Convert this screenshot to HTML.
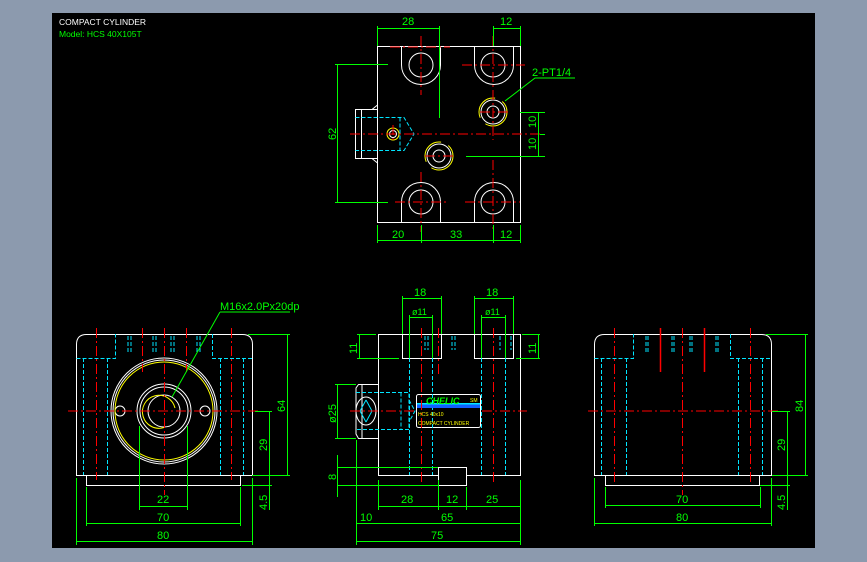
<!DOCTYPE html>
<html><head><meta charset="utf-8"><style>
html,body{margin:0;padding:0;background:#8c9aae;width:867px;height:562px;overflow:hidden}
svg{display:block}
text{font-family:"Liberation Sans",sans-serif}
</style></head><body>
<svg width="867" height="562" viewBox="0 0 867 562" xmlns="http://www.w3.org/2000/svg">
<rect x="52" y="13" width="763" height="535" fill="#000"/>
<text x="59" y="25" fill="#fff" font-size="8.5">COMPACT CYLINDER</text>
<text x="59" y="37" fill="#00ff00" font-size="8.5">Model: HCS 40X105T</text>

<g fill="none" stroke-width="1">
<!-- TOP VIEW -->
<g stroke="#fff">
<rect x="377.5" y="46.5" width="143" height="176"/>
<path d="M401.5 46.5V65A19.5 19.5 0 0 0 440.5 65V46.5"/>
<path d="M474.5 46.5V65A19.5 19.5 0 0 0 513.5 65V46.5"/>
<path d="M401.5 222.5V202A19.5 19.5 0 0 1 440.5 202V222.5"/>
<path d="M474.5 222.5V202A19.5 19.5 0 0 1 513.5 202V222.5"/>
<circle cx="421" cy="65" r="12"/><circle cx="493" cy="65" r="12"/>
<circle cx="421" cy="202" r="12"/><circle cx="493" cy="202" r="12"/>
<circle cx="493" cy="112" r="12"/><circle cx="493" cy="112" r="6"/>
<circle cx="439" cy="156" r="12"/><circle cx="439" cy="156" r="6"/>
<path d="M377.5 109.5H355.5V158.5H377.5M361.5 109.5V158.5M372 109.5L377.5 105M372 158.5L377.5 163"/>
</g>
<circle cx="493" cy="112" r="14" stroke="#ff0" stroke-dasharray="30 8"/>
<circle cx="439" cy="156" r="14" stroke="#ff0" stroke-dasharray="30 8"/>
<circle cx="393" cy="134" r="6" stroke="#ff0"/><circle cx="393" cy="134" r="3.5" stroke="#fff"/>
<path d="M355.5 117.5H404L414 134L404 150.5H355.5M400 117.5V150.5" stroke="#00e5ff" stroke-dasharray="4 2"/>
<g stroke="#f00" stroke-dasharray="10 3 2 3">
<path d="M350 134H540M421 36V95M493 36V140M421 172V232M493 160V232M390 47H450M462 65H525M395 202H448M465 202H520M480 112H510M425 156H455M393 125V143"/>
</g>
<g stroke="#00ff00">
<path d="M377.5 26V46M439.5 26V118M377.5 28.5H439.5M493.5 26V46M520.5 26V46M493.5 28.5H520.5"/>
<path d="M335 64.5H388M335 202.5H388M337.5 64.5V202.5"/>
<path d="M377.5 225V243M421.5 225V243M493.5 225V243M520.5 225V243M377.5 240.5H520.5"/>
<path d="M520 112.5H545M466 156.5H545M540 134.5H545M538.5 112.5V156.5"/>
<path d="M505 101L535 78H575"/>
</g>
<g fill="#00ff00" font-size="11" stroke="none">
<text x="402" y="25">28</text><text x="500" y="25">12</text>
<text x="392" y="238">20</text><text x="450" y="238">33</text><text x="500" y="238">12</text>
<text x="532" y="76">2-PT1/4</text>
<text transform="translate(336 140) rotate(-90)">62</text>
<text transform="translate(536 128) rotate(-90)">10</text>
<text transform="translate(536 150) rotate(-90)">10</text>
</g>

<!-- FRONT VIEW -->
<g stroke="#fff">
<rect x="378.5" y="334.5" width="142" height="141"/>
<rect x="402.5" y="334.5" width="39" height="24"/>
<rect x="474.5" y="334.5" width="39" height="24"/>
<rect x="438.5" y="467.5" width="28" height="18" fill="#000"/>
<path d="M378.5 384.5H358.5L356 388V434L358.5 438.5H378.5M362 384.5V438.5"/>
<ellipse cx="366" cy="411" rx="10" ry="14"/>
<rect x="416.5" y="394.5" width="64" height="33" rx="2" fill="#000"/>
</g>
<path d="M366 400L360 411L366 422M366 400L372 411L366 422" stroke="#00e5ff"/>
<path d="M356 392.5H409V429.5H356M401 392.5V429.5M409 400L415 411L409 422" stroke="#00e5ff" stroke-dasharray="4 2"/>
<path d="M409.5 358V475M432.5 358V475M481.5 358V475M505.5 358V475M425 336V350M428 336V350M452 336V350M455 336V350M500 336V350M511 336V350" stroke="#00e5ff" stroke-dasharray="4 2"/>
<rect x="417" y="404" width="63" height="4" fill="#1060ff" stroke="none"/>
<rect x="417" y="403" width="63" height="1.5" fill="#00e5ff" stroke="none"/>
<g stroke="#f00" stroke-dasharray="10 3 2 3">
<path d="M350 411H415M482 411H527M421.5 328V482M493.5 328V482M438.5 328V375"/>
</g>
<g stroke="#00ff00">
<path d="M402.5 296V334M441.5 296V334M402.5 298.5H441.5M474.5 296V334M513.5 296V334M474.5 298.5H513.5"/>
<path d="M409.5 315V358M432.5 315V358M409.5 317.5H432.5M481.5 315V358M505.5 315V358M481.5 317.5H505.5"/>
<path d="M357 334.5H376M357 358.5H399M359.5 334.5V358.5M522 334.5H540M516 358.5H540M538.5 334.5V358.5"/>
<path d="M335 384.5H356M335 438.5H356M337.5 384.5V438.5"/>
<path d="M337 467.5H438M337 485.5H438M337.5 455V497"/>
<path d="M378.5 480V510M438.5 480V510M466.5 487V510M520.5 480V545M378.5 506.5H520.5"/>
<path d="M356.5 440V545M356.5 523.5H520.5M356.5 541.5H520.5"/>
</g>
<g fill="#00ff00" font-size="11" stroke="none">
<text x="414" y="296">18</text><text x="486" y="296">18</text>
<text x="412" y="315" font-size="9">ø11</text><text x="485" y="315" font-size="9">ø11</text>
<text transform="translate(357 354) rotate(-90)">11</text>
<text transform="translate(536 354) rotate(-90)">11</text>
<text transform="translate(336 423) rotate(-90)">ø25</text>
<text transform="translate(336 480) rotate(-90)">8</text>
<text x="401" y="503">28</text><text x="446" y="503">12</text><text x="486" y="503">25</text>
<text x="360" y="521">10</text><text x="441" y="521">65</text><text x="431" y="539">75</text>
<text x="426" y="404" font-size="9" font-weight="bold" font-style="italic">CHELIC</text>
</g>
<g fill="#ff0" font-size="5" stroke="none">
<text x="470" y="402">SM</text><text x="418" y="416">HCS 40x10</text><text x="418" y="425">COMPACT CYLINDER</text>
</g>

<!-- LEFT VIEW -->
<g stroke="#fff">
<path d="M76.5 475.5V344.5Q76.5 334.5 86.5 334.5H242.5Q252.5 334.5 252.5 344.5V475.5Z"/>
<rect x="86.5" y="475.5" width="154" height="10"/>
<circle cx="164" cy="411" r="53"/><circle cx="164" cy="411" r="51"/>
<circle cx="164" cy="411" r="27"/><circle cx="164" cy="411" r="24"/><circle cx="164" cy="411" r="16"/>
<circle cx="120" cy="411" r="5"/><circle cx="205" cy="411" r="5"/>
</g>
<circle cx="164" cy="411" r="49" stroke="#ff0"/>
<path d="M153 414A16.5 16.5 0 1 0 164 394.5" stroke="#ff0" transform="rotate(180 164 411)"/>
<path d="M76.5 358.5H115.5V334M212.5 334V358.5H252.5M83.5 358V475M107.5 358V475M220.5 358V475M243.5 358V475M128 336V352M131 336V352M153 336V352M156 336V352M171 336V352M174 336V352M197 336V352M200 336V352" stroke="#00e5ff" stroke-dasharray="4 2"/>
<g stroke="#f00" stroke-dasharray="10 3 2 3">
<path d="M68 411H260M96.5 328V480M231.5 328V480M164.5 328V495M142.5 328V372M186.5 328V372"/>
</g>
<g stroke="#00ff00">
<path d="M220 312H290M220 312L172 397"/>
<path d="M248 334.5H290M252 475.5H290M287.5 334.5V475.5"/>
<path d="M255 411.5H272M242 485.5H272M269.5 411.5V510"/>
<path d="M139.5 426V510M187.5 426V510M139.5 506.5H187.5"/>
<path d="M86.5 487V526M240.5 487V526M86.5 523.5H240.5M76.5 478V545M252.5 478V545M76.5 541.5H252.5"/>
</g>
<g fill="#00ff00" font-size="11" stroke="none">
<text x="220" y="310">M16x2.0Px20dp</text>
<text transform="translate(285 412) rotate(-90)">64</text>
<text transform="translate(267 451) rotate(-90)">29</text>
<text transform="translate(267 510) rotate(-90)">4.5</text>
<text x="157" y="503">22</text><text x="157" y="521">70</text><text x="157" y="539">80</text>
</g>

<!-- RIGHT VIEW -->
<g stroke="#fff">
<path d="M594.5 475.5V344.5Q594.5 334.5 604.5 334.5H761.5Q771.5 334.5 771.5 344.5V475.5Z"/>
<rect x="605.5" y="475.5" width="154" height="10"/>
</g>
<path d="M594.5 358.5H633.5V334M730.5 334V358.5H771.5M601.5 358V475M626.5 358V475M738.5 358V475M762.5 358V475M646 336V352M648 336V352M672 336V352M674 336V352M690 336V352M692 336V352M716 336V352M718 336V352" stroke="#00e5ff" stroke-dasharray="4 2"/>
<g stroke="#f00" stroke-dasharray="10 3 2 3">
<path d="M588 411H780M614.5 328V482M682.5 328V495M750.5 328V482"/>
</g>
<path d="M660.5 328V372M704.5 328V372" stroke="#f00" stroke-width="1.5"/>
<g stroke="#00ff00">
<path d="M766 334.5H808M772 475.5H808M805.5 334.5V475.5"/>
<path d="M772 411.5H790M760 485.5H790M787.5 411.5V510"/>
<path d="M605.5 487V508M760.5 487V508M605.5 505.5H760.5M594.5 478V526M771.5 478V526M594.5 523.5H771.5"/>
</g>
<g fill="#00ff00" font-size="11" stroke="none">
<text transform="translate(803 412) rotate(-90)">84</text>
<text transform="translate(785 451) rotate(-90)">29</text>
<text transform="translate(785 510) rotate(-90)">4.5</text>
<text x="676" y="503">70</text><text x="676" y="521">80</text>
</g>
</g>
</svg>
</body></html>
